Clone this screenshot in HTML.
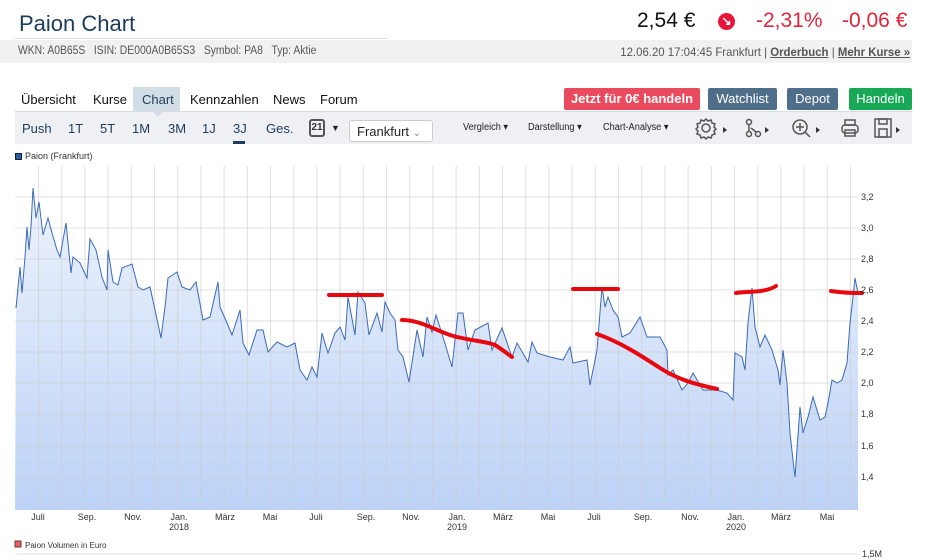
<!DOCTYPE html>
<html><head><meta charset="utf-8"><style>
*{margin:0;padding:0;box-sizing:border-box}
body{width:927px;height:560px;background:#fff;font-family:"Liberation Sans",sans-serif;position:relative;overflow:hidden;color:#222}
.a{position:absolute;white-space:nowrap}
.btn{position:absolute;top:88px;height:22px;color:#fff;font-size:13px;font-weight:bold;text-align:center;line-height:22px;border-radius:2px}
.tb{position:absolute;top:121px;font-size:13px;color:#1d3b5a}
.sm{position:absolute;top:122px;font-size:10px;color:#222;transform:scaleX(0.92);transform-origin:left}
</style></head><body>
<div class="a" style="left:19px;top:11px;font-size:22px;color:#1c3a5a">Paion Chart</div>
<div class="a" style="left:15px;top:38px;width:373px;height:1px;background:#ddd"></div>
<div class="a" style="left:0;top:40px;width:912px;height:23px;background:#f1f1f1"></div>
<div class="a" style="left:18px;top:45px;font-size:11.5px;color:#555;transform:scaleX(0.9);transform-origin:left">WKN: A0B65S &nbsp;&nbsp;ISIN: DE000A0B65S3 &nbsp;&nbsp;Symbol: PA8 &nbsp;&nbsp;Typ: Aktie</div>
<div class="a" style="right:17px;top:45px;font-size:12px;color:#555;transform:scaleX(0.95);transform-origin:right">12.06.20 17:04:45 Frankfurt | <u style="font-weight:bold">Orderbuch</u> | <u style="font-weight:bold">Mehr Kurse »</u></div>
<div class="a" style="left:637px;top:9px;font-size:21px;color:#111">2,54 €</div>
<div class="a" style="left:718px;top:13px;width:17px;height:17px;border-radius:50%;background:#e8173a;color:#fff;font-size:12px;line-height:17px;text-align:center;font-weight:bold">↘</div>
<div class="a" style="left:756px;top:9px;font-size:21px;color:#e0243a">-2,31%</div>
<div class="a" style="left:842px;top:9px;font-size:21px;color:#e0243a">-0,06 €</div>
<div class="a" style="left:133px;top:87px;width:47px;height:25px;background:#d3dde6"></div>
<div class="a" style="left:152px;top:111px;width:0;height:0;border-left:6px solid transparent;border-right:6px solid transparent;border-top:6px solid #d3dde6;z-index:2"></div>
<div class="a" style="left:21px;top:92px;font-size:13px;color:#111">Übersicht</div>
<div class="a" style="left:93px;top:92px;font-size:13px;color:#111">Kurse</div>
<div class="a" style="left:142px;top:92px;font-size:13px;color:#1d3b5a">Chart</div>
<div class="a" style="left:190px;top:92px;font-size:13px;color:#111">Kennzahlen</div>
<div class="a" style="left:273px;top:92px;font-size:13px;color:#111">News</div>
<div class="a" style="left:320px;top:92px;font-size:13px;color:#111">Forum</div>
<div class="btn" style="left:564px;width:136px;background:#ea4a5d">Jetzt für 0€ handeln</div>
<div class="btn" style="left:708px;width:69px;background:#4e6e8a;font-weight:normal">Watchlist</div>
<div class="btn" style="left:787px;width:51px;background:#4e6e8a;font-weight:normal">Depot</div>
<div class="btn" style="left:849px;width:63px;background:#18a957;font-weight:normal">Handeln</div>
<div class="a" style="left:15px;top:111px;width:897px;height:33px;background:#eef0f3;border-top:1px solid #d8dde2"></div>
<div class="tb" style="left:22px">Push</div><div class="tb" style="left:68px">1T</div><div class="tb" style="left:100px">5T</div><div class="tb" style="left:132px">1M</div><div class="tb" style="left:168px">3M</div><div class="tb" style="left:202px">1J</div><div class="tb" style="left:233px">3J</div><div class="tb" style="left:266px">Ges.</div>
<div class="a" style="left:233px;top:141px;width:12px;height:3px;background:#1d3b5a"></div>
<div class="a" style="left:309px;top:119px;width:16px;height:18px;border:2px solid #555;border-radius:3px;font-size:10px;font-weight:bold;text-align:center;line-height:14px;color:#333">21</div>
<div class="a" style="left:331px;top:123px;font-size:9px">▼</div>
<div class="a" style="left:349px;top:120px;width:84px;height:22px;background:#fff;border:1px solid #ccc;border-radius:3px;font-size:13px;padding:3px 0 0 7px;color:#222">Frankfurt <span style="font-size:10px;color:#888">⌄</span></div>
<div class="sm" style="left:463px">Vergleich ▾</div>
<div class="sm" style="left:528px">Darstellung ▾</div>
<div class="sm" style="left:603px">Chart-Analyse ▾</div>
<svg class="a" style="left:690px;top:115px" width="222" height="26" fill="none" stroke="#555" stroke-width="1.5">
<circle cx="16" cy="13" r="4"/><path d="M16 4l2 2 3-1 1 3 3 1-1 3 2 2-2 2 1 3-3 1-1 3-3-1-2 2-2-2-3 1-1-3-3-1 1-3-2-2 2-2-1-3 3-1 1-3 3 1z"/>
<path d="M33 12l4 3-4 3z" fill="#333" stroke="none"/>
<circle cx="59" cy="7" r="2.5"/><circle cx="59" cy="19" r="2.5"/><circle cx="68" cy="19" r="2.5"/><path d="M59 10v6M61 13l5 4"/>
<path d="M75 12l4 3-4 3z" fill="#333" stroke="none"/>
<circle cx="110" cy="12" r="7"/><path d="M115 17l5 5M110 8v8M106 12h8"/>
<path d="M126 12l4 3-4 3z" fill="#333" stroke="none"/>
<rect x="152" y="10" width="16" height="8" rx="3"/><rect x="155" y="5" width="10" height="5"/><rect x="155" y="15" width="10" height="6"/>
<rect x="185" y="4" width="16" height="18"/><rect x="189" y="4" width="8" height="5"/><rect x="189" y="14" width="8" height="8"/>
<path d="M206 12l4 3-4 3z" fill="#333" stroke="none"/>
</svg>
<div class="a" style="left:15px;top:153px;width:7px;height:7px;background:#2a5aa8;border:1px solid #123"></div>
<div class="a" style="left:25px;top:151px;font-size:9px;color:#333">Paion (Frankfurt)</div>
<svg class="a" style="left:0;top:0" width="927" height="560">
<defs><linearGradient id="g" x1="0" y1="0" x2="0" y2="1"><stop offset="0" stop-color="#eef3fd"/><stop offset="1" stop-color="#bcd2f6"/></linearGradient></defs>
<rect x="15" y="166" width="843" height="344" fill="#fff"/>
<polygon fill="url(#g)" points="15,510 16,308 20,267 22,293 25,257 27,227 29,250 31,227 33,188 36,218 39,202 43,235 48,218 52,233 57,250 60,257 66,223 71,273 73,257 80,263 87,278 90,239 96,250 102,277 107,290 108,250 113,282 118,285 122,268 132,264 138,287 143,290 150,287 155,310 161,338 165,307 168,278 177,272 182,287 190,290 196,282 203,320 210,317 218,282 220,307 227,323 232,335 240,310 243,343 249,355 257,330 263,330 268,352 277,342 287,347 295,343 300,370 307,380 312,367 317,377 322,333 328,353 335,333 340,327 345,340 348,297 355,335 358,292 365,303 369,335 377,313 382,332 385,302 390,313 395,320 398,350 403,357 409,382 417,330 423,357 427,317 432,332 436,315 443,337 452,367 458,313 463,313 468,350 475,330 488,323 492,350 502,328 512,357 517,343 528,362 532,342 537,353 550,357 563,360 570,347 573,363 587,360 590,385 597,350 602,287 605,307 608,297 613,310 618,317 622,337 630,333 640,317 647,337 660,337 667,350 668,375 673,370 682,390 688,383 693,373 703,390 717,390 727,393 733,400 735,353 742,357 745,370 748,323 752,288 755,327 760,347 765,335 772,350 778,370 780,385 783,350 787,383 790,433 793,460 795,477 800,407 803,433 808,417 813,397 820,420 825,417 828,403 832,380 837,383 842,380 847,363 850,323 853,297 855,278 858,293 858,510"/>
<g stroke="#ccc" stroke-opacity="0.6" stroke-width="1">
<path d="M15 197H858M15 228H858M15 259H858M15 290H858M15 321H858M15 352H858M15 383H858M15 414H858M15 446H858M15 477H858"/>
<path d="M38.5 166V510M61.7 166V510M84.9 166V510M108.1 166V510M131.3 166V510M154.5 166V510M177.7 166V510M200.9 166V510M224.1 166V510M247.3 166V510M270.5 166V510M293.7 166V510M316.9 166V510M340.1 166V510M363.3 166V510M386.5 166V510M409.7 166V510M432.9 166V510M456.1 166V510M479.3 166V510M502.5 166V510M525.7 166V510M548.9 166V510M572.1 166V510M595.3 166V510M618.5 166V510M641.7 166V510M664.9 166V510M688.1 166V510M711.3 166V510M734.5 166V510M757.7 166V510M780.9 166V510M804.1 166V510M827.3 166V510M850.5 166V510"/>
</g>
<polyline fill="none" stroke="#3a6ab8" stroke-width="1" points="16,308 20,267 22,293 25,257 27,227 29,250 31,227 33,188 36,218 39,202 43,235 48,218 52,233 57,250 60,257 66,223 71,273 73,257 80,263 87,278 90,239 96,250 102,277 107,290 108,250 113,282 118,285 122,268 132,264 138,287 143,290 150,287 155,310 161,338 165,307 168,278 177,272 182,287 190,290 196,282 203,320 210,317 218,282 220,307 227,323 232,335 240,310 243,343 249,355 257,330 263,330 268,352 277,342 287,347 295,343 300,370 307,380 312,367 317,377 322,333 328,353 335,333 340,327 345,340 348,297 355,335 358,292 365,303 369,335 377,313 382,332 385,302 390,313 395,320 398,350 403,357 409,382 417,330 423,357 427,317 432,332 436,315 443,337 452,367 458,313 463,313 468,350 475,330 488,323 492,350 502,328 512,357 517,343 528,362 532,342 537,353 550,357 563,360 570,347 573,363 587,360 590,385 597,350 602,287 605,307 608,297 613,310 618,317 622,337 630,333 640,317 647,337 660,337 667,350 668,375 673,370 682,390 688,383 693,373 703,390 717,390 727,393 733,400 735,353 742,357 745,370 748,323 752,288 755,327 760,347 765,335 772,350 778,370 780,385 783,350 787,383 790,433 793,460 795,477 800,407 803,433 808,417 813,397 820,420 825,417 828,403 832,380 837,383 842,380 847,363 850,323 853,297 855,278 858,293"/>
<g fill="none" stroke="#e8070e" stroke-width="4" stroke-linecap="round">
<path d="M329 295H382"/>
<path d="M402 320C420 320 435 330 450 335S490 342 495 345 505 352 512 357"/>
<path d="M597 334C620 342 640 355 660 368S700 385 717 389"/>
<path d="M573 289H618"/>
<path d="M736 293C750 291 765 293 776 286"/>
<path d="M831 291C845 293 852 293 862 293"/>
</g>
<g font-family="Liberation Sans, sans-serif" font-size="9" fill="#333">
<text x="861" y="200">3,2</text><text x="861" y="231">3,0</text><text x="861" y="262">2,8</text><text x="861" y="293">2,6</text><text x="861" y="324">2,4</text><text x="861" y="355">2,2</text><text x="861" y="386">2,0</text><text x="861" y="417">1,8</text><text x="861" y="449">1,6</text><text x="861" y="480">1,4</text>
</g>
<g font-family="Liberation Sans, sans-serif" font-size="9" fill="#333" text-anchor="middle">
<text x="38" y="520">Juli</text><text x="87" y="520">Sep.</text><text x="133" y="520">Nov.</text><text x="179" y="520">Jan.</text><text x="179" y="530">2018</text><text x="225" y="520">März</text><text x="270" y="520">Mai</text><text x="316" y="520">Juli</text><text x="366" y="520">Sep.</text><text x="411" y="520">Nov.</text><text x="457" y="520">Jan.</text><text x="457" y="530">2019</text><text x="503" y="520">März</text><text x="548" y="520">Mai</text><text x="594" y="520">Juli</text><text x="643" y="520">Sep.</text><text x="690" y="520">Nov.</text><text x="736" y="520">Jan.</text><text x="736" y="530">2020</text><text x="781" y="520">März</text><text x="827" y="520">Mai</text>
</g>
<rect x="15" y="541" width="6" height="6" fill="#d9666a" stroke="#733"/>
<text x="25" y="548" font-family="Liberation Sans, sans-serif" font-size="8" fill="#333">Paion Volumen in Euro</text>
<path d="M15 554H858" stroke="#e3e3e3"/>
<text x="862" y="557" font-family="Liberation Sans, sans-serif" font-size="9" fill="#333">1,5M</text>
</svg>
</body></html>
